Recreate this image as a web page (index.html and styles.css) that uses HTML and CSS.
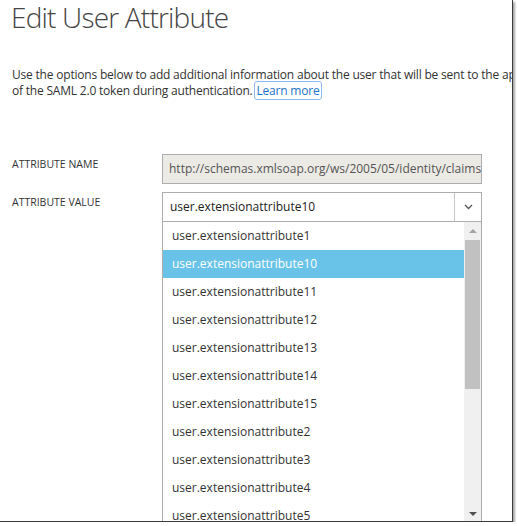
FILE: index.html
```html
<!DOCTYPE html>
<html lang="en">
  <head>
    <meta charset="UTF-8" />
    <title>Edit User Attribute</title>
    <link rel="stylesheet" href="styles.css">
  </head>
  <body>
    <div class="frame">
      <h1 class="title">Edit User Attribute</h1>
      <p class="intro">
        Use the options below to add additional information about the user that will be sent to the application as part<br>
        of the SAML 2.0 token during authentication. <a class="learn" href="#">Learn more</a>
      </p>

      <div class="row">
        <label class="label">ATTRIBUTE NAME</label>
        <div class="field readonly">http://schemas.xmlsoap.org/ws/2005/05/identity/claims/name</div>
      </div>

      <div class="row">
        <label class="label">ATTRIBUTE VALUE</label>
        <div class="combo">
          <div class="select">
            <span class="select-text">user.extensionattribute10</span>
            <span class="select-btn">
              <svg width="9" height="6" viewBox="0 0 9 6"><path d="M1 1l3.5 3.5L8 1" fill="none" stroke="#555" stroke-width="1.3"/></svg>
            </span>
          </div>
          <div class="list">
            <ul class="options">
              <li>user.extensionattribute1</li>
              <li class="active">user.extensionattribute10</li>
              <li>user.extensionattribute11</li>
              <li>user.extensionattribute12</li>
              <li>user.extensionattribute13</li>
              <li>user.extensionattribute14</li>
              <li>user.extensionattribute15</li>
              <li>user.extensionattribute2</li>
              <li>user.extensionattribute3</li>
              <li>user.extensionattribute4</li>
              <li>user.extensionattribute5</li>
              <li>user.extensionattribute6</li>
            </ul>
            <div class="scrollbar">
              <span class="arrow up"></span>
              <span class="thumb"></span>
              <span class="arrow down"></span>
            </div>
          </div>
        </div>
      </div>
    </div>
  </body>
</html>
```

FILE: styles.css
```css
body {
  margin: 0;
  background: #fff;
  font-family: "Open Sans", "Noto Sans", Arial, sans-serif;
  color: #333;
}
.frame {
  width: 512px;
  height: 521px;
  overflow: hidden;
  border-right: 1px solid #3c3c3c;
  border-bottom: 1px solid #3c3c3c;
  box-shadow: 2px 2px 2px rgba(0, 0, 0, 0.35);
  background: #fff;
}
.title {
  margin: 0;
  padding: 0 0 0 11px;
  font-size: 28px;
  font-weight: 300;
  letter-spacing: -0.8px;
  line-height: 34px;
  color: #444;
  white-space: nowrap;
}
.intro {
  margin: 33px 0 0 12px;
  font-size: 12px;
  letter-spacing: -0.2px;
  line-height: 16px;
  white-space: nowrap;
}
.learn {
  color: #1a73c6;
  text-decoration: none;
  outline: 1px solid #8fb8f0;
  border-radius: 2px;
  padding: 0 1px;
}
.row {
  display: flex;
  margin-left: 12px;
}
.intro + .row {
  margin-top: 55px;
}
.row + .row {
  margin-top: 8px;
}
.label {
  width: 150px;
  font-size: 10.5px;
  padding-top: 3px;
  color: #333;
}
.field {
  box-sizing: border-box;
  width: 320px;
  height: 30px;
  line-height: 28px;
  border: 1px solid #adadad;
  font-size: 12px;
  padding-left: 6px;
  overflow: hidden;
  white-space: nowrap;
}
.readonly {
  background: #ebeae4;
  color: #555;
}
.combo {
  width: 320px;
}
.select {
  display: flex;
  height: 30px;
  border: 1px solid #adadad;
  box-sizing: border-box;
  font-size: 12px;
  color: #222;
}
.select-text {
  flex: 1;
  line-height: 28px;
  padding-left: 7px;
}
.select-btn {
  width: 26px;
  border-left: 1px solid #c6c6c6;
  display: flex;
  align-items: center;
  justify-content: center;
}
.list {
  display: flex;
  border-left: 1px solid #adadad;
  border-right: 1px solid #adadad;
  height: 310px;
}
.options {
  list-style: none;
  margin: 0;
  padding: 0;
  flex: 1;
  font-size: 12px;
}
.options li {
  height: 28px;
  line-height: 28px;
  padding-left: 9px;
  color: #333;
}
.options li.active {
  background: #69c3e8;
  color: #fff;
}
.scrollbar {
  width: 17px;
  background: #f0f0f0;
  position: relative;
}
.thumb {
  position: absolute;
  left: 1px;
  right: 1px;
  top: 18px;
  height: 149px;
  background: #c1c1c1;
}
.arrow {
  position: absolute;
  left: 5px;
  width: 0;
  height: 0;
  border-left: 4px solid transparent;
  border-right: 4px solid transparent;
}
.arrow.up {
  top: 7px;
  border-bottom: 4px solid #a3a3a3;
}
.arrow.down {
  top: 290px;
  border-top: 4px solid #505050;
}
```
